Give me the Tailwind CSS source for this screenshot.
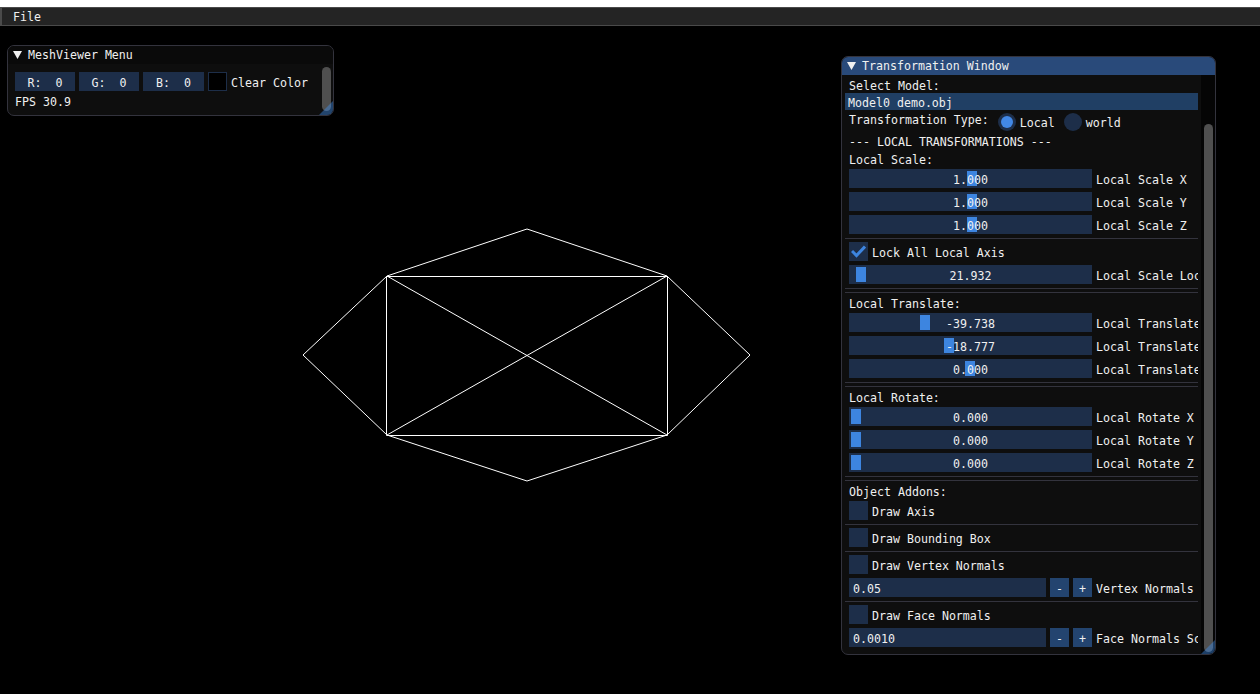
<!DOCTYPE html>
<html lang="en">
  <head>
    <meta charset="UTF-8" />
    <script src="https://cdn.jsdelivr.net/npm/@tailwindcss/browser@4"></script>
    <title>MeshViewer</title>
  </head>

  <body class="bg-black text-[#f0f0f0] font-['DejaVu_Sans_Mono',monospace] text-[11.62px] leading-[15px] overflow-hidden">
    <div class="relative w-[1260px] h-[694px] overflow-hidden">
      <!-- window chrome + menu bar -->
      <div class="h-[7px] bg-white"></div>
      <div class="h-[19px] bg-[#242424] border-t border-b border-[#4a4a4a] border-l-2 flex items-center pl-[11px] pt-[2px]">File</div>

      <!-- mesh -->
      <svg class="absolute left-0 top-0" width="1260" height="694" fill="none" stroke="#ffffff" stroke-width="1">
        <path d="M303 355 387 276 527 229 667 276 750 355 667 435 527 481 387 435Z" />
        <path d="M386.500 276.500H667.500V435.500H386.500Z" />
        <path d="M387 276 667 435M667 276 387 435" />
      </svg>

      <!-- menu window -->
      <div class="absolute left-[7px] top-[45px] w-[327px] h-[71px] bg-[#0e0e0e] border border-[#33333d] rounded-[7px] overflow-hidden">
        <div class="h-[18px] bg-[#0a0a0a] flex items-center pl-[5px] gap-[5px]">
          <svg width="10" height="10"><path d="M0 1H9L4.500 9Z" fill="#f0f0f0" /></svg>
          <span>MeshViewer Menu</span>
        </div>
        <div class="flex items-center gap-1 pl-[7px] mt-[8px] h-[19px]">
          <div class="w-[60px] h-[19px] bg-[#1d2e49] flex items-center justify-center whitespace-pre pt-[4px]">R:  0</div>
          <div class="w-[60px] h-[19px] bg-[#1d2e49] flex items-center justify-center whitespace-pre pt-[4px]">G:  0</div>
          <div class="w-[61px] h-[19px] bg-[#1d2e49] flex items-center justify-center whitespace-pre pt-[4px]">B:  0</div>
          <div class="w-[19px] h-[19px] bg-black border border-[#1d2e49]"></div>
          <span class="mt-[4px]">Clear Color</span>
        </div>
        <div class="pl-[7px] mt-[4px]">FPS 30.9</div>
        <div class="absolute right-[2px] top-[21px] bottom-[4px] w-[9px] bg-[#4f4f4f] rounded-[5px]"></div>
        <div class="absolute right-0 bottom-0 w-[14px] h-[14px] bg-[#4296fa]/40 [clip-path:polygon(100%_0,100%_100%,0_100%)]"></div>
      </div>

      <!-- transformation window -->
      <div class="absolute left-[841px] top-[56px] w-[375px] h-[599px] bg-[#0e0e0e] border border-[#33333d] rounded-[7px] overflow-hidden">
        <div class="h-[18px] bg-[#294a7a] flex items-center pl-[5px] gap-[5px]">
          <svg width="10" height="10"><path d="M0 1H9L4.500 9Z" fill="#f0f0f0" /></svg>
          <span>Transformation Window</span>
        </div>

        <!-- scrollbar -->
        <div class="absolute right-0 top-[18px] bottom-0 w-[14px] bg-[#050505]">
          <div class="absolute left-[3px] right-[2px] top-[49px] bottom-[2px] bg-[#4f4f4f] rounded-[5px]"></div>
        </div>
        <div class="absolute right-0 bottom-0 w-[14px] h-[14px] bg-[#4296fa]/40 [clip-path:polygon(100%_0,100%_100%,0_100%)]"></div>

        <div class="w-[356px] overflow-hidden">
          <div class="pl-[7px] h-[13px] mt-[4px]">Select Model:</div>
          <div class="ml-[3px] h-[17px] mt-[1px] bg-[#203f64] flex items-center pl-[3px] pt-[3px]">Model0 demo.obj</div>

          <div class="flex items-center h-[19px] mt-[2px] pl-[7px]">
            <span class="mb-[3px] shrink-0">Transformation Type:</span>
            <div class="ml-[9px] mt-px w-[18px] h-[18px] rounded-full bg-[#1d2e49] flex items-center justify-center shrink-0"><div class="w-[12px] h-[12px] rounded-full bg-[#4288e6]"></div></div>
            <span class="ml-[4px] mt-[3px]">Local</span>
            <div class="ml-[9px] mt-px w-[18px] h-[18px] rounded-full bg-[#1d2e49] shrink-0"></div>
            <span class="ml-[4px] mt-[3px]">world</span>
          </div>

          <div class="pl-[7px] h-[13px] mt-[4px]">--- LOCAL TRANSFORMATIONS ---</div>
          <div class="pl-[7px] h-[13px] mt-[4px] pt-px">Local Scale:</div>

          <div class="flex flex-col gap-1 mt-[4px]">
            <div class="flex items-center h-[19px] pl-[7px]"><div class="relative w-[243px] h-[19px] bg-[#1d2e49] flex items-center justify-center shrink-0 pt-[4px]"><div class="absolute left-[118px] top-[2px] w-[10px] h-[15px] bg-[#3d85e0]"></div><span class="relative">1.000</span></div><span class="ml-[4px] mt-[4px] whitespace-nowrap">Local Scale X</span></div>
            <div class="flex items-center h-[19px] pl-[7px]"><div class="relative w-[243px] h-[19px] bg-[#1d2e49] flex items-center justify-center shrink-0 pt-[4px]"><div class="absolute left-[118px] top-[2px] w-[10px] h-[15px] bg-[#3d85e0]"></div><span class="relative">1.000</span></div><span class="ml-[4px] mt-[4px] whitespace-nowrap">Local Scale Y</span></div>
            <div class="flex items-center h-[19px] pl-[7px]"><div class="relative w-[243px] h-[19px] bg-[#1d2e49] flex items-center justify-center shrink-0 pt-[4px]"><div class="absolute left-[118px] top-[2px] w-[10px] h-[15px] bg-[#3d85e0]"></div><span class="relative">1.000</span></div><span class="ml-[4px] mt-[4px] whitespace-nowrap">Local Scale Z</span></div>
          </div>

          <div class="ml-[3px] h-px bg-[#33333d] mt-[4px]"></div>
          <div class="flex items-center h-[19px] pl-[7px] mt-[3px]">
            <div class="w-[19px] h-[19px] bg-[#1d2e49] flex items-center justify-center shrink-0">
              <svg width="15" height="13" fill="none" stroke="#3d85e0" stroke-width="3"><path d="M1 6 5.500 10.500 14 1.500" /></svg>
            </div>
            <span class="ml-[4px] mt-[3px]">Lock All Local Axis</span>
          </div>
          <div class="flex items-center h-[19px] pl-[7px] mt-1"><div class="relative w-[243px] h-[19px] bg-[#1d2e49] flex items-center justify-center shrink-0 pt-[4px]"><div class="absolute left-[7px] top-[2px] w-[10px] h-[15px] bg-[#3d85e0]"></div><span class="relative">21.932</span></div><span class="ml-[4px] mt-[4px] whitespace-nowrap">Local Scale Lock</span></div>

          <div class="ml-[3px] h-px bg-[#33333d] mt-[4px]"></div>
          <div class="ml-[3px] h-px bg-[#33333d] mt-[3px]"></div>
          <div class="pl-[7px] h-[13px] mt-[3px] pt-px">Local Translate:</div>
          <div class="flex flex-col gap-1 mt-[4px]">
            <div class="flex items-center h-[19px] pl-[7px]"><div class="relative w-[243px] h-[19px] bg-[#1d2e49] flex items-center justify-center shrink-0 pt-[4px]"><div class="absolute left-[71px] top-[2px] w-[10px] h-[15px] bg-[#3d85e0]"></div><span class="relative">-39.738</span></div><span class="ml-[4px] mt-[4px] whitespace-nowrap">Local Translate X</span></div>
            <div class="flex items-center h-[19px] pl-[7px]"><div class="relative w-[243px] h-[19px] bg-[#1d2e49] flex items-center justify-center shrink-0 pt-[4px]"><div class="absolute left-[95px] top-[2px] w-[10px] h-[15px] bg-[#3d85e0]"></div><span class="relative">-18.777</span></div><span class="ml-[4px] mt-[4px] whitespace-nowrap">Local Translate Y</span></div>
            <div class="flex items-center h-[19px] pl-[7px]"><div class="relative w-[243px] h-[19px] bg-[#1d2e49] flex items-center justify-center shrink-0 pt-[4px]"><div class="absolute left-[116px] top-[2px] w-[10px] h-[15px] bg-[#3d85e0]"></div><span class="relative">0.000</span></div><span class="ml-[4px] mt-[4px] whitespace-nowrap">Local Translate Z</span></div>
          </div>

          <div class="ml-[3px] h-px bg-[#33333d] mt-[4px]"></div>
          <div class="ml-[3px] h-px bg-[#33333d] mt-[3px]"></div>
          <div class="pl-[7px] h-[13px] mt-[3px] pt-px">Local Rotate:</div>
          <div class="flex flex-col gap-1 mt-[4px]">
            <div class="flex items-center h-[19px] pl-[7px]"><div class="relative w-[243px] h-[19px] bg-[#1d2e49] flex items-center justify-center shrink-0 pt-[4px]"><div class="absolute left-[2px] top-[2px] w-[10px] h-[15px] bg-[#3d85e0]"></div><span class="relative">0.000</span></div><span class="ml-[4px] mt-[4px] whitespace-nowrap">Local Rotate X</span></div>
            <div class="flex items-center h-[19px] pl-[7px]"><div class="relative w-[243px] h-[19px] bg-[#1d2e49] flex items-center justify-center shrink-0 pt-[4px]"><div class="absolute left-[2px] top-[2px] w-[10px] h-[15px] bg-[#3d85e0]"></div><span class="relative">0.000</span></div><span class="ml-[4px] mt-[4px] whitespace-nowrap">Local Rotate Y</span></div>
            <div class="flex items-center h-[19px] pl-[7px]"><div class="relative w-[243px] h-[19px] bg-[#1d2e49] flex items-center justify-center shrink-0 pt-[4px]"><div class="absolute left-[2px] top-[2px] w-[10px] h-[15px] bg-[#3d85e0]"></div><span class="relative">0.000</span></div><span class="ml-[4px] mt-[4px] whitespace-nowrap">Local Rotate Z</span></div>
          </div>

          <div class="ml-[3px] h-px bg-[#33333d] mt-[4px]"></div>
          <div class="ml-[3px] h-px bg-[#33333d] mt-[3px]"></div>
          <div class="pl-[7px] h-[13px] mt-[3px] pt-px">Object Addons:</div>

          <div class="flex items-center h-[19px] pl-[7px] mt-[4px]"><div class="w-[19px] h-[19px] bg-[#1d2e49] shrink-0"></div><span class="ml-[4px] mt-[4px]">Draw Axis</span></div>
          <div class="ml-[3px] h-px bg-[#33333d] mt-[4px]"></div>
          <div class="flex items-center h-[19px] pl-[7px] mt-[3px]"><div class="w-[19px] h-[19px] bg-[#1d2e49] shrink-0"></div><span class="ml-[4px] mt-[4px]">Draw Bounding Box</span></div>
          <div class="ml-[3px] h-px bg-[#33333d] mt-[4px]"></div>
          <div class="flex items-center h-[19px] pl-[7px] mt-[3px]"><div class="w-[19px] h-[19px] bg-[#1d2e49] shrink-0"></div><span class="ml-[4px] mt-[4px]">Draw Vertex Normals</span></div>
          <div class="flex items-center h-[19px] pl-[7px] mt-1">
            <div class="w-[197px] h-[19px] bg-[#1d2e49] flex items-center pl-[4px] pt-[4px] shrink-0">0.05</div>
            <div class="ml-[4px] w-[19px] h-[19px] bg-[#23446f] flex items-center justify-center pt-[4px] shrink-0">-</div>
            <div class="ml-[4px] w-[19px] h-[19px] bg-[#23446f] flex items-center justify-center pt-[4px] shrink-0">+</div>
            <span class="ml-[4px] mt-[4px] whitespace-nowrap">Vertex Normals Scale</span>
          </div>
          <div class="ml-[3px] h-px bg-[#33333d] mt-[4px]"></div>
          <div class="flex items-center h-[19px] pl-[7px] mt-[3px]"><div class="w-[19px] h-[19px] bg-[#1d2e49] shrink-0"></div><span class="ml-[4px] mt-[4px]">Draw Face Normals</span></div>
          <div class="flex items-center h-[19px] pl-[7px] mt-1">
            <div class="w-[197px] h-[19px] bg-[#1d2e49] flex items-center pl-[4px] pt-[4px] shrink-0">0.0010</div>
            <div class="ml-[4px] w-[19px] h-[19px] bg-[#23446f] flex items-center justify-center pt-[4px] shrink-0">-</div>
            <div class="ml-[4px] w-[19px] h-[19px] bg-[#23446f] flex items-center justify-center pt-[4px] shrink-0">+</div>
            <span class="ml-[4px] mt-[4px] whitespace-nowrap">Face Normals Scale</span>
          </div>
        </div>
      </div>
    </div>
  </body>
</html>
